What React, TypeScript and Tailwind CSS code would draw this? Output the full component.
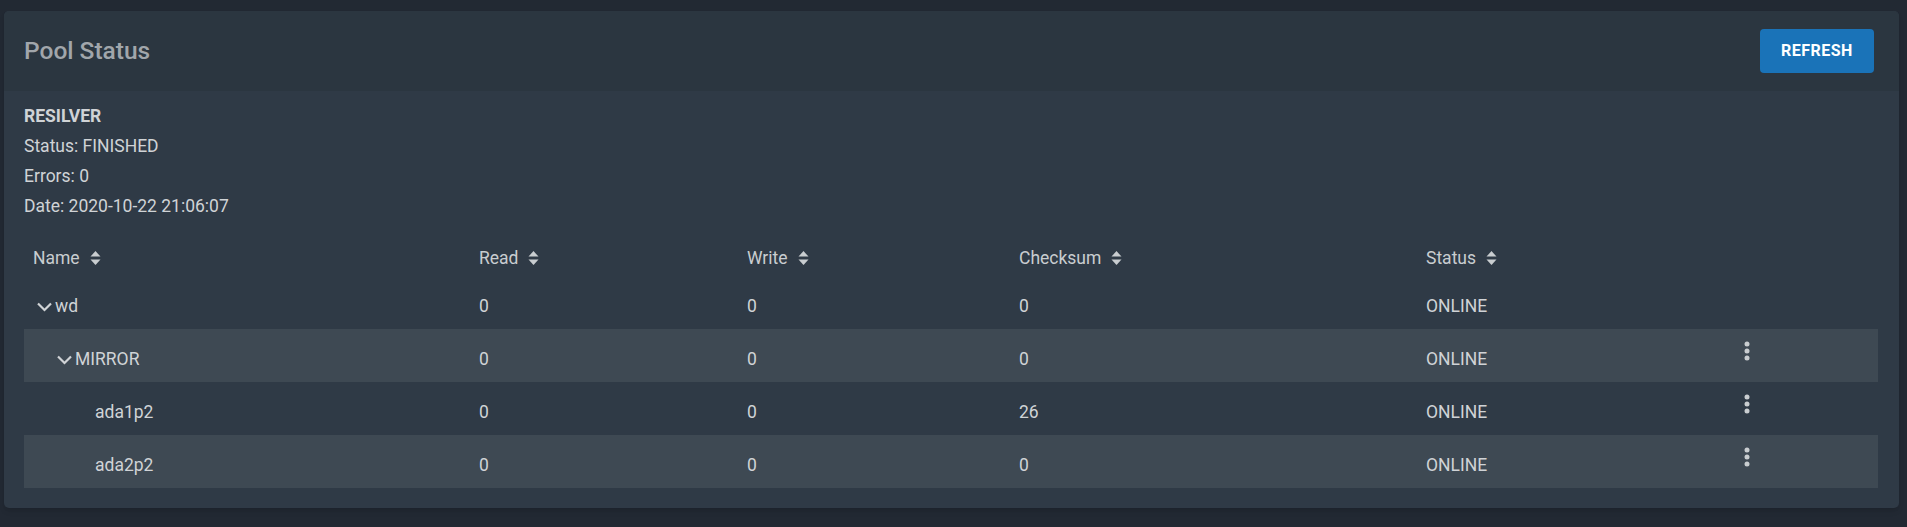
type Row = {
  name: string
  depth: number
  expandable?: boolean
  read: string
  write: string
  checksum: string
  status: string
  menu?: boolean
}

const rows: Row[] = [
  { name: 'wd', depth: 0, expandable: true, read: '0', write: '0', checksum: '0', status: 'ONLINE' },
  { name: 'MIRROR', depth: 1, expandable: true, read: '0', write: '0', checksum: '0', status: 'ONLINE', menu: true },
  { name: 'ada1p2', depth: 2, read: '0', write: '0', checksum: '26', status: 'ONLINE', menu: true },
  { name: 'ada2p2', depth: 2, read: '0', write: '0', checksum: '0', status: 'ONLINE', menu: true },
]

function SortIcon() {
  return (
    <svg viewBox="0 0 10 14" className="w-[11px] h-[14px] ml-[10px] text-[#c9cdd0]" fill="currentColor">
      <path d="M5 0 L10 5.6 H0 Z" />
      <path d="M5 14 L10 8.4 H0 Z" />
    </svg>
  )
}

function Chevron() {
  return (
    <svg viewBox="0 0 15 10" className="w-[15px] h-[10px] mr-[3px]" fill="none" stroke="currentColor" strokeWidth="2.2">
      <path d="M1 1.5 L7.5 8 L14 1.5" />
    </svg>
  )
}

function Kebab() {
  return (
    <svg viewBox="0 0 24 24" className="w-6 h-6 text-[#c9cdd0]" fill="currentColor">
      <circle cx="12" cy="5" r="2.5" />
      <circle cx="12" cy="12" r="2.5" />
      <circle cx="12" cy="19" r="2.5" />
    </svg>
  )
}

const cols = 'grid grid-cols-[446px_268px_272px_407px_309px_1fr]'

export default function App() {
  return (
    <div className="min-h-[527px] bg-[#222933] pt-[11px] pl-[4px] pr-[8px] pb-5 font-['Roboto',sans-serif]">
      <div className="rounded-[5px] bg-[#2f3a46] overflow-hidden shadow-md">
        {/* Header */}
        <div className="h-[80px] bg-[#2b3640] flex items-center justify-between pl-5 pr-[25px]">
          <h1 className="text-[24.5px] font-medium text-[#a1a6ab]">Pool Status</h1>
          <button className="w-[114px] h-[44px] rounded-[4px] bg-[#1a73b8] text-white text-[16px] font-bold tracking-[0.03em]">
            REFRESH
          </button>
        </div>

        {/* Body */}
        <div className="pl-5 pr-[21px] pt-[10px] pb-5 text-[17.5px] text-[#d0d3d6]">
          <div className="leading-[30px]">
            <div className="font-bold">RESILVER</div>
            <div>Status: FINISHED</div>
            <div>Errors: 0</div>
            <div>Date: 2020-10-22 21:06:07</div>
          </div>

          <div className="mt-[19px]">
            <div className={`${cols} h-[36px] items-center text-[#c9cdd0]`}>
              {['Name', 'Read', 'Write', 'Checksum', 'Status'].map((h) => (
                <div key={h} className="pl-[9px] flex items-center">
                  {h}
                  <SortIcon />
                </div>
              ))}
              <div />
            </div>

            {rows.map((r, i) => (
              <div
                key={r.name}
                className={`${cols} h-[53px] items-center ${i % 2 === 1 ? 'bg-[#3e4953]' : ''}`}
              >
                <div className="flex items-center pt-2" style={{ paddingLeft: 13 + r.depth * 20 }}>
                  {r.expandable ? <Chevron /> : <span className="w-[18px]" />}
                  <span>{r.name}</span>
                </div>
                <div className="pl-[9px] pt-2">{r.read}</div>
                <div className="pl-[9px] pt-2">{r.write}</div>
                <div className="pl-[9px] pt-2">{r.checksum}</div>
                <div className="pl-[9px] pt-2">{r.status}</div>
                <div className="pl-[9px] pb-[9px] flex items-center">{r.menu && <Kebab />}</div>
              </div>
            ))}
          </div>
        </div>
      </div>
    </div>
  )
}
